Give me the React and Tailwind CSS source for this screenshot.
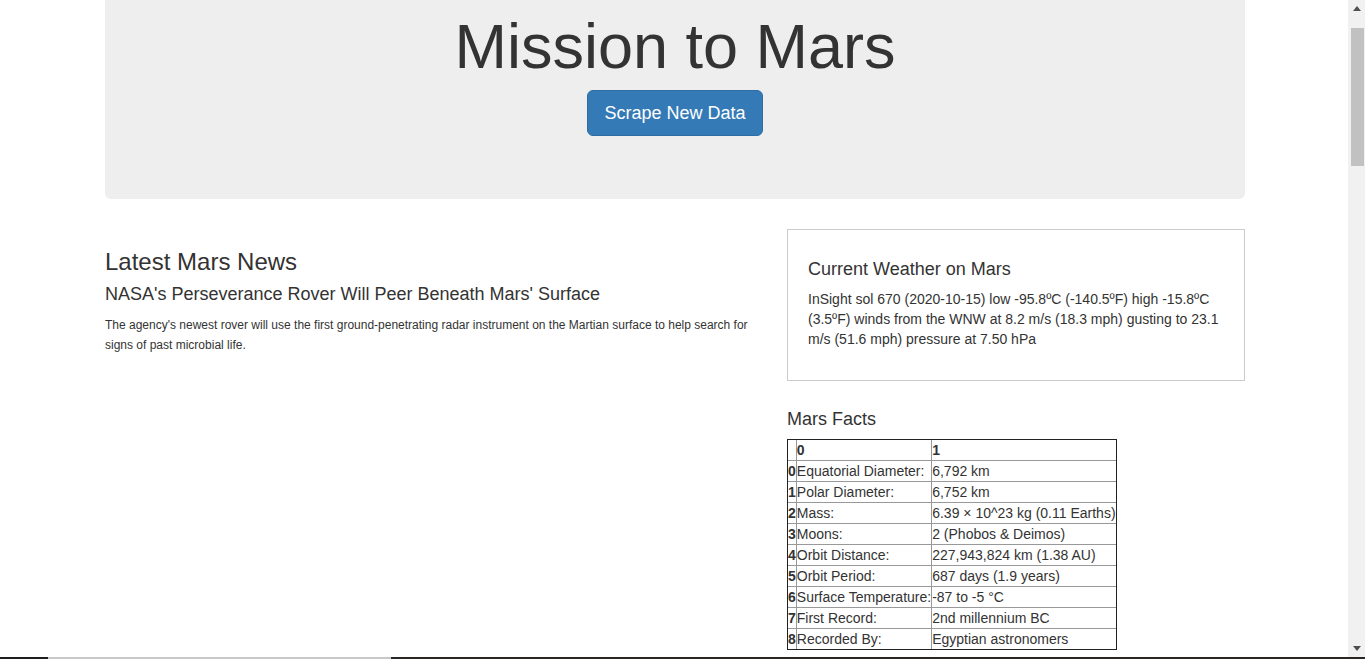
const FACTS = [
  ['Equatorial Diameter:', '6,792 km'],
  ['Polar Diameter:', '6,752 km'],
  ['Mass:', '6.39 × 10^23 kg (0.11 Earths)'],
  ['Moons:', '2 (Phobos & Deimos)'],
  ['Orbit Distance:', '227,943,824 km (1.38 AU)'],
  ['Orbit Period:', '687 days (1.9 years)'],
  ['Surface Temperature:', '-87 to -5 °C'],
  ['First Record:', '2nd millennium BC'],
  ['Recorded By:', 'Egyptian astronomers'],
];

function Cell({ first, top, bold, children }) {
  return (
    <td
      className={`p-0 align-top whitespace-nowrap border-[#999] ${first ? '' : 'border-l'} ${top ? '' : 'border-t'} ${bold ? 'font-bold' : ''}`}
    >
      {children}
    </td>
  );
}

function FactsTable() {
  return (
    <table className="border-separate border-spacing-0 border border-[#222] text-[14px] leading-[20px] text-[#333]">
      <tbody>
        <tr>
          <Cell first top bold />
          <Cell top bold>0</Cell>
          <Cell top bold>1</Cell>
        </tr>
        {FACTS.map(([k, v], i) => (
          <tr key={k}>
            <Cell first bold>{i}</Cell>
            <Cell>{k}</Cell>
            <Cell>{v}</Cell>
          </tr>
        ))}
      </tbody>
    </table>
  );
}

function Scrollbar() {
  return (
    <div className="w-[17px] shrink-0 bg-[#f1f1f1] flex flex-col">
      <div className="h-[17px] flex items-center justify-center">
        <svg width="8" height="5" viewBox="0 0 8 5"><path d="M0 5 L4 0 L8 5 Z" fill="#505050" /></svg>
      </div>
      <div className="mt-[11px] h-[138px] ml-[3px] mr-[1px] bg-[#c1c1c1]" />
      <div className="flex-1" />
      <div className="h-[17px] flex items-center justify-center">
        <svg width="8" height="5" viewBox="0 0 8 5"><path d="M0 0 L8 0 L4 5 Z" fill="#505050" /></svg>
      </div>
    </div>
  );
}

export default function App() {
  return (
    <div className="w-[1365px] h-[659px] overflow-hidden flex flex-col bg-white text-[#333] font-['Liberation_Sans',Arial,sans-serif]">
      <div className="flex flex-1 min-h-0">
        <main className="flex-1 min-w-0 overflow-hidden">
          <div className="w-[1140px] ml-[105px]">
            {/* Jumbotron */}
            <div className="h-[199px] bg-[#eee] rounded-b-md flex flex-col items-center pt-[12px]">
              <h1 className="text-[63px] leading-[69px] font-normal">Mission to Mars</h1>
              <button className="mt-[9px] px-[16px] py-[10px] text-[18px] leading-[24px] text-white bg-[#337ab7] border border-[#2e6da4] rounded-md">
                Scrape New Data
              </button>
            </div>

            <div className="mt-[30px] grid grid-cols-[652px_1fr] gap-[30px]">
              {/* News */}
              <div>
                <h3 className="mt-[20px] text-[24px] leading-[26px]">Latest Mars News</h3>
                <h4 className="mt-[9px] text-[18px] leading-[20px]">
                  NASA's Perseverance Rover Will Peer Beneath Mars' Surface
                </h4>
                <p className="mt-[11px] text-[12px] leading-[20px]">
                  The agency's newest rover will use the first ground-penetrating radar instrument on the Martian surface to help search for signs of past microbial life.
                </p>
              </div>

              {/* Weather + facts */}
              <div>
                <div className="border border-[#ccc] p-[20px]">
                  <h4 className="mt-[9px] text-[18px] leading-[20px]">Current Weather on Mars</h4>
                  <p className="mt-[10px] mb-[11px] text-[14px] leading-[20px]">
                    InSight sol 670 (2020-10-15) low -95.8ºC (-140.5ºF) high -15.8ºC (3.5ºF) winds from the WNW at 8.2 m/s (18.3 mph) gusting to 23.1 m/s (51.6 mph) pressure at 7.50 hPa
                  </p>
                </div>
                <h4 className="mt-[28px] text-[18px] leading-[20px]">Mars Facts</h4>
                <div className="mt-[10px]">
                  <FactsTable />
                </div>
              </div>
            </div>
          </div>
        </main>
        <Scrollbar />
      </div>
      <div className="h-[2px] flex shrink-0">
        <div className="w-[48px] bg-[#1e1e1e]" />
        <div className="w-[343px] bg-[#c8c8c8]" />
        <div className="flex-1 bg-[#2a2624]" />
      </div>
    </div>
  );
}
